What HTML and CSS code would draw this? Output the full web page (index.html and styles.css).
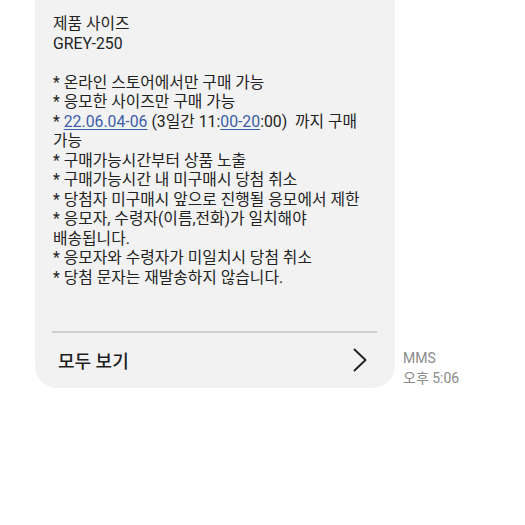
FILE: index.html
```html
<!DOCTYPE html>
<html lang="ko">
<head>
<meta charset="utf-8">
<link rel="stylesheet" href="styles.css">
</head>
<body>
<div class="row">
  <div class="bubble">
    <div class="text">
      <div>제품 사이즈</div>
      <div>GREY-250</div>
      <div class="blank">&nbsp;</div>
      <div>* 온라인 스토어에서만 구매 가능</div>
      <div>* 응모한 사이즈만 구매 가능</div>
      <div>* <a class="lnk">22.06.04-06</a> (3일간 11:<a class="lnk">00-20</a>:00)&nbsp; 까지 구매<br>가능</div>
      <div>* 구매가능시간부터 상품 노출</div>
      <div>* 구매가능시간 내 미구매시 당첨 취소</div>
      <div>* 당첨자 미구매시 앞으로 진행될 응모에서 제한</div>
      <div>* 응모자, 수령자(이름,전화)가 일치해야<br>배송됩니다.</div>
      <div>* 응모자와 수령자가 미일치시 당첨 취소</div>
      <div>* 당첨 문자는 재발송하지 않습니다.</div>
    </div>
    <div class="divider"></div>
    <div class="footer">
      <span class="more">모두 보기</span>
      <svg class="chev" width="14" height="24" viewBox="0 0 14 24"><path d="M1.5 1.5 L12.5 12 L1.5 22.5" fill="none" stroke="#222" stroke-width="1.9" stroke-linecap="round" stroke-linejoin="round"/></svg>
    </div>
  </div>
  <div class="meta">
    <div>MMS</div>
    <div>오후 5:06</div>
  </div>
</div>
</body>
</html>
```
FILE: styles.css
```css
html, body {
  margin: 0;
  padding: 0;
  background: #ffffff;
}
body {
  font-family: Roboto, "Noto Sans CJK KR", sans-serif;
  color: #222222;
}
.row {
  display: flex;
  align-items: flex-end;
  padding-left: 35px;
}
.bubble {
  width: 360px;
  background: #f2f2f2;
  border-radius: 0 0 22px 22px;
  padding-top: 14px;
}
.text {
  padding: 0 8px 0 18px;
  font-size: 15.8px;
  line-height: 19.5px;
  color: #222222;
}
.lnk {
  color: #3d5da8;
  text-decoration: underline;
  text-underline-offset: 2px;
}
.divider {
  height: 1.5px;
  background: #cfcfcf;
  margin: 44px 18px 0 17px;
}
.footer {
  display: flex;
  align-items: center;
  justify-content: space-between;
  height: 55px;
  padding: 0 28px 0 23px;
}
.more {
  font-size: 18px;
  font-weight: 500;
  color: #1e1e1e;
}
.chev {
  display: block;
}
.meta {
  margin-left: 8px;
  font-size: 14px;
  line-height: 20px;
  color: #8a8a8a;
  padding-bottom: 0;
}
```
